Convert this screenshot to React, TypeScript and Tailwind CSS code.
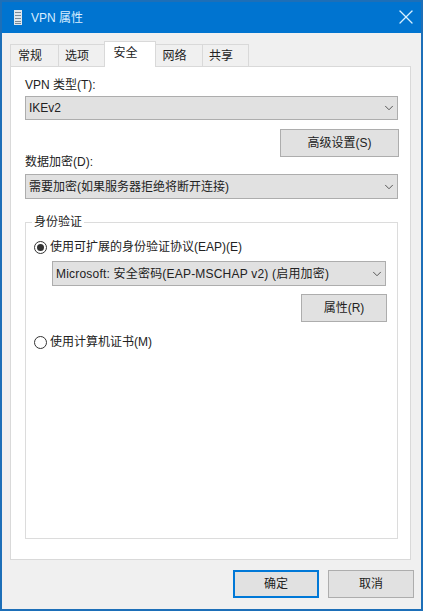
import { ChevronDown, X } from "lucide-react";

const font = { fontFamily: '"Liberation Sans", "Noto Sans CJK SC", sans-serif' };

function Combo({ label, className }: { label: string; className: string }) {
  return (
    <div
      className={`flex items-center justify-between bg-[#e1e1e1] border border-[#adadad] pl-[3px] pr-[1px] text-[12px] text-[#222222] ${className}`}
    >
      <span>{label}</span>
      <ChevronDown className="w-[14px] h-[14px] text-[#444444]" strokeWidth={1.5} />
    </div>
  );
}

function Button({ label, className }: { label: string; className: string }) {
  return (
    <div
      className={`flex items-center justify-center bg-[#e1e1e1] text-[12px] text-[#222222] ${className}`}
    >
      {label}
    </div>
  );
}

function Radio({ label, checked }: { label: string; checked?: boolean }) {
  return (
    <div className="flex items-center h-[18px] text-[12px] text-[#222222]">
      <div className="w-[13px] h-[13px] rounded-full border border-[#333333] bg-white flex items-center justify-center">
        {checked && <div className="w-[7px] h-[7px] rounded-full bg-[#333333]" />}
      </div>
      <span className="ml-[3px]">{label}</span>
    </div>
  );
}

function Tab({ label, className }: { label: string; className: string }) {
  return (
    <div
      className={`h-[22px] -ml-px pr-[9px] bg-[#f0f0f0] border border-b-0 border-[#d9d9d9] flex items-center justify-center text-[12px] text-[#222222] ${className}`}
    >
      {label}
    </div>
  );
}

export default function App() {
  return (
    <div
      style={font}
      className="w-[423px] h-[611px] bg-[#f0f0f0] flex flex-col overflow-hidden border-2 border-[#1d6fb8]"
    >
      {/* title bar */}
      <div className="h-[31px] shrink-0 bg-[#0074d0] flex items-center pl-[12px] pr-[3px] text-white">
        <svg width="8" height="15" viewBox="0 0 8 15" className="shrink-0">
          <rect x="0" y="0" width="8" height="15" fill="#dfe6ec" />
          <rect x="1" y="2" width="6" height="1" fill="#7b8a96" />
          <rect x="1" y="5" width="6" height="1" fill="#7b8a96" />
          <rect x="1" y="8" width="6" height="1" fill="#7b8a96" />
          <rect x="1" y="11" width="6" height="1" fill="#7b8a96" />
          <rect x="1" y="13" width="6" height="1" fill="#7b8a96" />
        </svg>
        <span className="ml-[9px] text-[12px] text-[#d8eeff]">VPN 属性</span>
        <X className="ml-auto mb-[2px] w-[24px] h-[24px] text-[#d8f0ff]" strokeWidth={1.3} />
      </div>

      {/* tabs */}
      <div className="flex items-end h-[33px] shrink-0 pl-[9px]">
        <Tab label="常规" className="w-[49px]" />
        <Tab label="选项" className="w-[47px]" />
        <div className="w-[52px] h-[26px] -ml-px -mb-px pr-[9px] bg-white border border-b-0 border-[#d9d9d9] z-10 flex items-center justify-center text-[12px] text-[#222222] pb-[3px]">
          安全
        </div>
        <Tab label="网络" className="w-[48px]" />
        <Tab label="共享" className="w-[47px]" />
      </div>

      {/* panel */}
      <div className="ml-[8px] w-[401px] h-[494px] shrink-0 bg-white border border-[#d9d9d9] px-[14px] flex flex-col">
        <div className="mt-[8px] h-[20px] flex items-center text-[12px] text-[#222222]">
          VPN 类型(T):
        </div>
        <Combo label="IKEv2" className="mt-[1px] w-[373px] h-[24px]" />
        <div className="flex justify-end w-[374px] mt-[9px]">
          <Button label="高级设置(S)" className="w-[119px] h-[28px] border border-[#adadad]" />
        </div>
        <div className="h-[16px] pb-[6px] flex items-center text-[12px] text-[#222222]">
          数据加密(D):
        </div>
        <Combo label="需要加密(如果服务器拒绝将断开连接)" className="mt-[1px] w-[373px] h-[25px]" />

        <fieldset className="mt-[15px] w-[373px] h-[325px] border border-[#dcdcdc] px-[8px]">
          <legend className="ml-[-2px] px-[2px] text-[12px] leading-[16px] text-[#222222]">身份验证</legend>
          <div className="mt-[8px]">
            <Radio label="使用可扩展的身份验证协议(EAP)(E)" checked />
          </div>
          <Combo
            label="Microsoft: 安全密码(EAP-MSCHAP v2) (启用加密)"
            className="mt-[5px] ml-[18px] w-[334px] h-[25px] tracking-[0.2px]"
          />
          <div className="flex justify-end w-[353px] mt-[8px]">
            <Button label="属性(R)" className="w-[86px] h-[28px] border border-[#adadad]" />
          </div>
          <div className="mt-[11px]">
            <Radio label="使用计算机证书(M)" />
          </div>
        </fieldset>
      </div>

      {/* footer */}
      <div className="flex justify-end gap-[9px] mt-[10px] pr-[7px]">
        <Button label="确定" className="w-[86px] h-[28px] border-2 border-[#0078d7]" />
        <Button label="取消" className="w-[86px] h-[28px] border border-[#adadad]" />
      </div>
    </div>
  );
}
